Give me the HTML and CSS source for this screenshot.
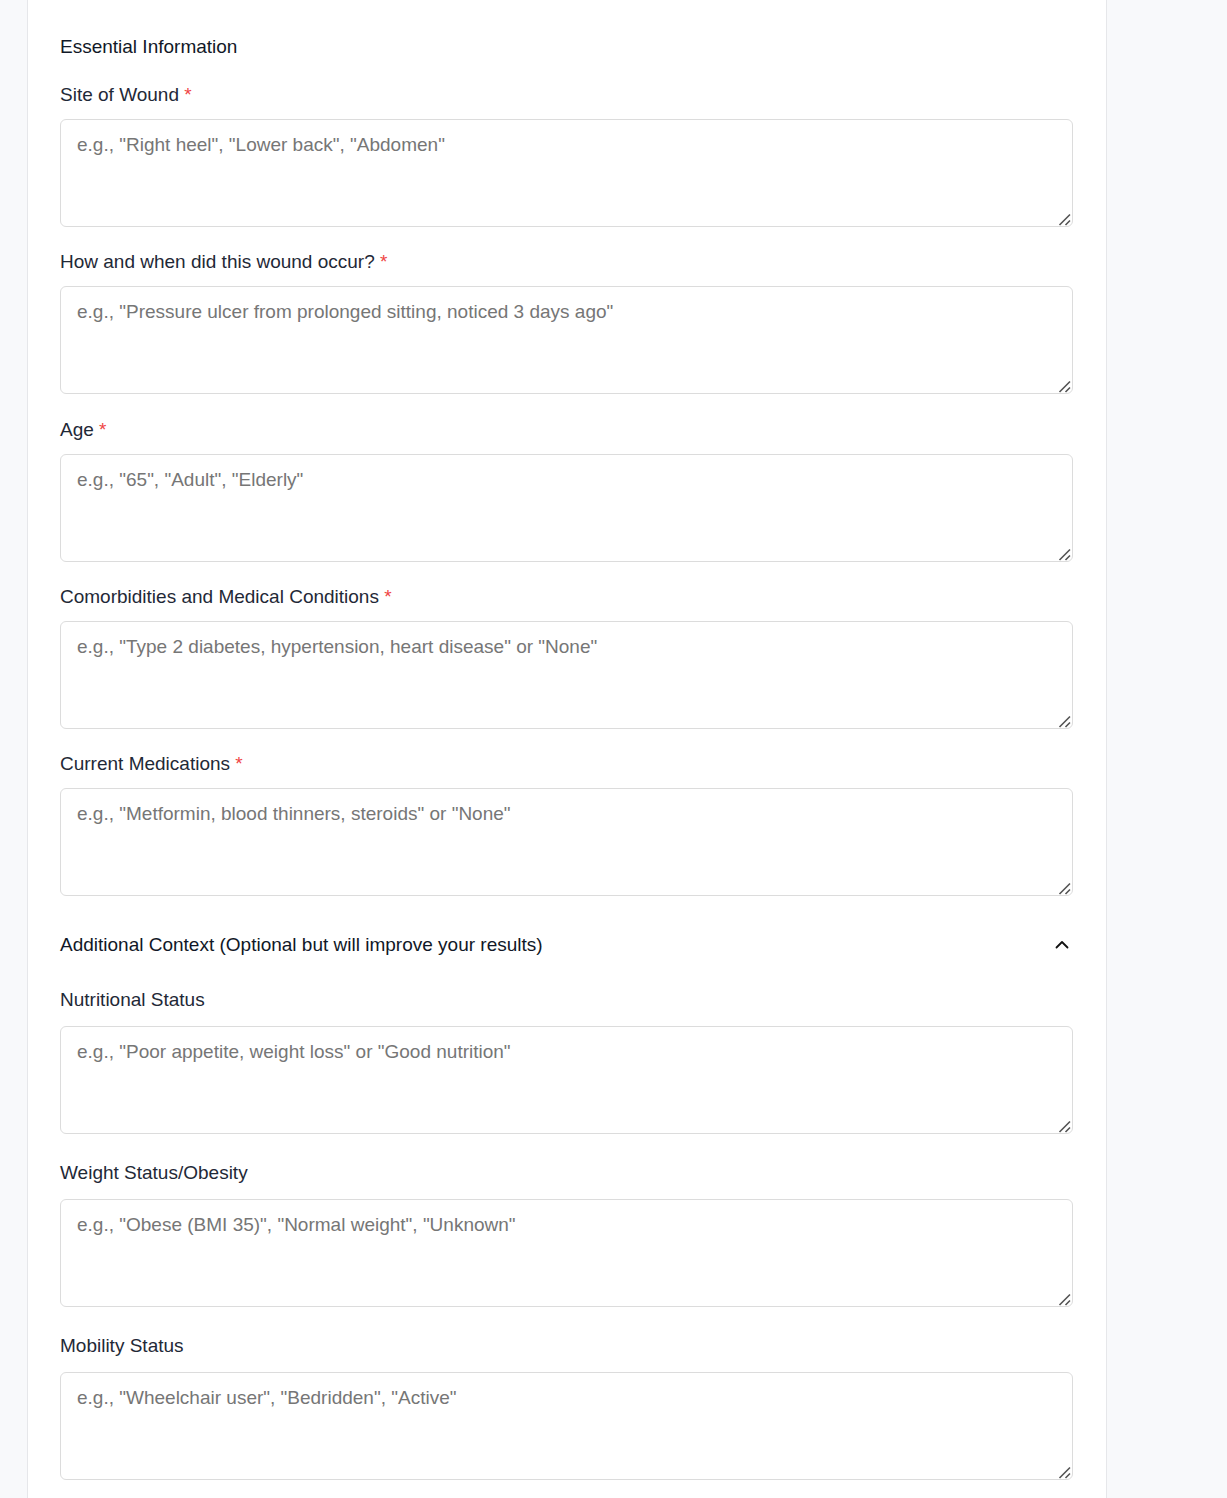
FILE: index.html
```html
<!DOCTYPE html>
<html lang="en">
<head>
<meta charset="utf-8">
<title>Wound Assessment</title>
<link rel="stylesheet" href="styles.css">
</head>
<body>
<div class="page">
  <main class="card">
    <h2 class="section-title">Essential Information</h2>

    <div class="field">
      <label class="label">Site of Wound <span class="req">*</span></label>
      <textarea class="input" placeholder='e.g., "Right heel", "Lower back", "Abdomen"'></textarea>
    </div>
    <div class="field">
      <label class="label">How and when did this wound occur? <span class="req">*</span></label>
      <textarea class="input" placeholder='e.g., "Pressure ulcer from prolonged sitting, noticed 3 days ago"'></textarea>
    </div>
    <div class="field">
      <label class="label">Age <span class="req">*</span></label>
      <textarea class="input" placeholder='e.g., "65", "Adult", "Elderly"'></textarea>
    </div>
    <div class="field">
      <label class="label">Comorbidities and Medical Conditions <span class="req">*</span></label>
      <textarea class="input" placeholder='e.g., "Type 2 diabetes, hypertension, heart disease" or "None"'></textarea>
    </div>
    <div class="field">
      <label class="label">Current Medications <span class="req">*</span></label>
      <textarea class="input" placeholder='e.g., "Metformin, blood thinners, steroids" or "None"'></textarea>
    </div>

    <div class="collapse-head">
      <span class="collapse-title">Additional Context (Optional but will improve your results)</span>
      <svg class="chev" width="16" height="16" viewBox="0 0 16 16" aria-hidden="true"><path d="M2.5 10.5 L8 5 L13.5 10.5" fill="none" stroke="#111" stroke-width="1.8" stroke-linecap="round" stroke-linejoin="round"/></svg>
    </div>

    <div class="opt">
      <div class="ofield">
        <label class="label">Nutritional Status</label>
        <textarea class="input" placeholder='e.g., "Poor appetite, weight loss" or "Good nutrition"'></textarea>
      </div>
      <div class="ofield">
        <label class="label">Weight Status/Obesity</label>
        <textarea class="input" placeholder='e.g., "Obese (BMI 35)", "Normal weight", "Unknown"'></textarea>
      </div>
      <div class="ofield">
        <label class="label">Mobility Status</label>
        <textarea class="input" placeholder='e.g., "Wheelchair user", "Bedridden", "Active"'></textarea>
      </div>
    </div>
  </main>
</div>
</body>
</html>
```

FILE: styles.css
```css
html, body {
  margin: 0;
  padding: 0;
  background: #f8f9fb;
  font-family: "Liberation Sans", Arial, sans-serif;
}
.page {
  padding-left: 27px;
  height: 1498px;
  overflow: hidden;
}
.card {
  width: 1013px;
  background: #ffffff;
  border-left: 1px solid #e6e7ea;
  border-right: 1px solid #e6e7ea;
  padding: 33px 33px 40px 32px;
  min-height: 1600px;
}
.section-title {
  margin: 0;
  font-size: 19px;
  font-weight: 400;
  line-height: 27px;
  color: #111827;
}
.field {
  margin-top: 21px;
  display: flex;
  flex-direction: column;
}
.field + .field {
  margin-top: 21.25px;
}
.label {
  font-size: 19px;
  line-height: 27px;
  color: #1f2937;
  margin-bottom: 11px;
}
.req {
  color: #ef4444;
}
.input {
  display: block;
  box-sizing: border-box;
  width: 100%;
  height: 108px;
  margin: 0;
  padding: 12px 16px;
  border: 1px solid #dcdcdc;
  border-radius: 6px;
  font-family: "Liberation Sans", Arial, sans-serif;
  font-size: 19px;
  line-height: 26px;
  color: #111827;
  background: #ffffff;
  resize: vertical;
  outline: none;
}
.input::placeholder {
  color: #767676;
}
.input::-webkit-resizer {
  background: url("data:image/svg+xml;utf8,<svg xmlns='http://www.w3.org/2000/svg' width='15' height='15' viewBox='0 0 15 15'><path d='M2.5 14 L13 3.5 M8.5 14 L13 9.5' stroke='%23555' stroke-width='1.6' fill='none'/></svg>") no-repeat center / 15px 15px;
  width: 15px;
  height: 15px;
}
.collapse-head {
  margin-top: 35px;
  display: flex;
  align-items: center;
  justify-content: space-between;
  height: 27px;
  padding-right: 3px;
}
.collapse-title {
  font-size: 19px;
  line-height: 27px;
  color: #111827;
}
.chev {
  display: block;
}
.opt {
  margin-top: 28px;
}
.ofield {
  display: flex;
  flex-direction: column;
}
.ofield + .ofield {
  margin-top: 25px;
}
.ofield .label {
  margin-bottom: 13px;
}
```
